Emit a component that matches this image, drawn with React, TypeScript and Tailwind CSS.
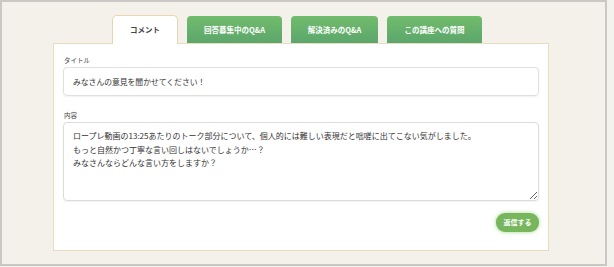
const tabs = ['回答募集中のQ&A', '解決済みのQ&A', 'この講座への質問'];
const tabWidths = ['w-[95px]', 'w-[87px]', 'w-[95px]'];

export default function App() {
  return (
    <div
      className="w-[614px] h-[267px] bg-[#f4f2ec]"
      style={{ fontFamily: '"Noto Sans CJK JP", "Noto Sans", sans-serif' }}
    >
      <div className="w-[607px] h-[266px] bg-[#f3f1ea] border-2 border-[#c9c8c4] pt-[13px] pl-[51px]">
        <div className="w-[496px]">
          {/* tabs */}
          <div className="flex items-end gap-[9px] pl-[59px] h-[28px]">
            <div className="relative z-10 -mb-px w-[66px] h-[29px] bg-white border border-b-0 border-[#e9d6b0] rounded-t-[5px] flex items-center justify-center text-[7.5px] font-bold text-[#444]">
              コメント
            </div>
            {tabs.map((t, i) => (
              <div
                key={t}
                className={`${tabWidths[i]} h-[27px] rounded-t-[4px] bg-gradient-to-b from-[#72bc6d] to-[#5ba66b] flex items-center justify-center text-[7.5px] font-bold text-white`}
              >
                {t}
              </div>
            ))}
          </div>

          {/* panel */}
          <div className="h-[208px] bg-white border border-[#e9dcbf] px-[9px] pt-[10px] flex flex-col">
            <div className="text-[6.5px] leading-[12px] text-[#444] pl-px">タイトル</div>
            <div className="mt-px h-[29px] border border-[#e0e0e0] rounded-[4px] shadow-[0_1px_2px_rgba(0,0,0,0.06)] flex items-center pl-[9px] text-[7.8px] text-[#333]">
              みなさんの意見を聞かせてください！
            </div>
            <div className="mt-[13px] text-[6.5px] leading-[12px] text-[#444] pl-px">内容</div>
            <textarea
              readOnly
              defaultValue={
                'ロープレ動画の13:25あたりのトーク部分について、個人的には難しい表現だと咄嗟に出てこない気がしました。\nもっと自然かつ丁寧な言い回しはないでしょうか…？\nみなさんならどんな言い方をしますか？'
              }
              className="mt-px h-[79px] w-full border border-[#dcdcdc] rounded-[4px] shadow-[0_1px_2px_rgba(0,0,0,0.06)] pl-[9px] pt-[6px] text-[8px] leading-[13.5px] text-[#333] outline-none resize-y"
              style={{ fontFamily: '"Noto Sans CJK JP", "Noto Sans", sans-serif' }}
            />
            <div className="flex justify-end mt-[12px]">
              <button className="w-[43px] h-[19px] rounded-[9px] bg-[#78b65e] text-white text-[7px] font-bold shadow-[0_0_4px_rgba(130,200,100,0.7)]">
                返信する
              </button>
            </div>
          </div>
        </div>
      </div>
    </div>
  );
}
